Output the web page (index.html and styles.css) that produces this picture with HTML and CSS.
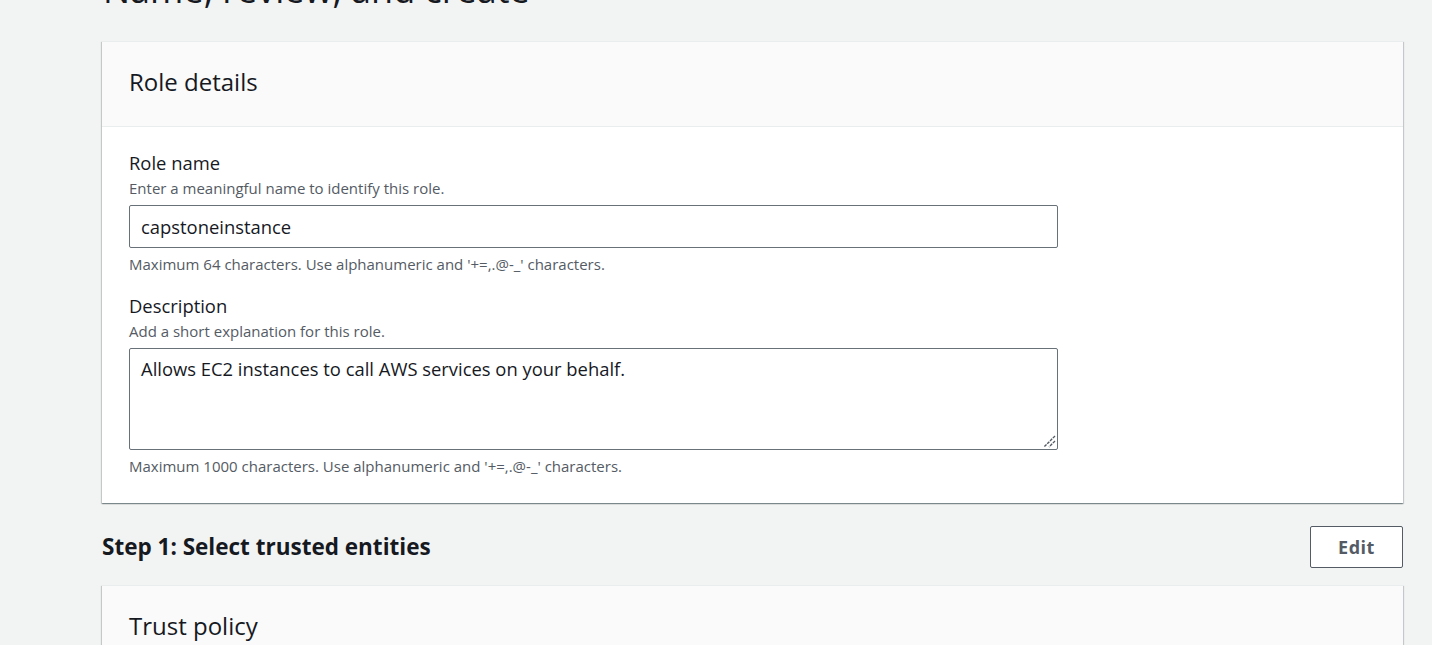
FILE: index.html
```html
<!DOCTYPE html>
<html>
<head>
<meta charset="utf-8">
<link rel="stylesheet" href="styles.css">
</head>
<body>
<main class="page">
  <h1 class="page-title">Name, review, and create</h1>
  <section class="card">
    <div class="card-header"><h2 class="card-title">Role details</h2></div>
    <div class="card-body">
      <div class="field">
        <div class="label">Role name</div>
        <div class="desc">Enter a meaningful name to identify this role.</div>
        <div class="input">capstoneinstance</div>
        <div class="constraint">Maximum 64 characters. Use alphanumeric and '+=,.@-_' characters.</div>
      </div>
      <div class="field">
        <div class="label">Description</div>
        <div class="desc">Add a short explanation for this role.</div>
        <div class="input textarea">Allows EC2 instances to call AWS services on your behalf.
          <svg class="grip" width="14" height="14" viewBox="0 0 14 14"><path d="M13 2 L2 13 M13 7 L7 13" stroke="#545b64" stroke-width="1.4" stroke-dasharray="3 1"/></svg>
        </div>
        <div class="constraint">Maximum 1000 characters. Use alphanumeric and '+=,.@-_' characters.</div>
      </div>
    </div>
  </section>
  <div class="step-head">
    <h2 class="step-title">Step 1: Select trusted entities</h2>
    <button class="btn">Edit</button>
  </div>
  <section class="card">
    <div class="card-header"><h2 class="card-title">Trust policy</h2></div>
  </section>
</main>
</body>
</html>
```
FILE: styles.css
```css
html, body { margin: 0; padding: 0; }
body {
  background: #f2f3f3;
  font-family: "Open Sans", "Noto Sans", sans-serif;
  color: #16191f;
  overflow: hidden;
  height: 645px;
}
.page {
  width: 1301px;
  margin-left: 102px;
}
.page-title {
  font-size: 36px;
  font-weight: 400;
  line-height: 40px;
  margin: -30px 0 0 1px;
  height: 40px;
  white-space: nowrap;
}
.card {
  background: #fff;
  margin-top: 31px;
  box-shadow: 0 1px 1px 0 rgba(0,28,36,0.3), 1px 1px 1px 0 rgba(0,28,36,0.15), -1px 1px 1px 0 rgba(0,28,36,0.15);
  border-top: 1px solid #eaeded;
}
.card-header {
  background: #fafafa;
  height: 85px;
  box-sizing: border-box;
  padding: 0 27px 5px;
  border-bottom: 1px solid #eaeded;
  display: flex;
  align-items: center;
}
.card-title {
  font-size: 24px;
  font-weight: 400;
  margin: 0;
  line-height: 30px;
}
.card-body {
  padding: 24px 27px 26px;
  display: flex;
  flex-direction: column;
  gap: 19px;
}
.label {
  font-size: 18.4px;
  line-height: 24px;
}
.desc, .constraint {
  font-size: 15px;
  line-height: 22px;
  color: #545b64;
}
.desc { margin-top: 2px; }
.input {
  width: 929px;
  box-sizing: border-box;
  height: 43px;
  border: 1px solid #687078;
  border-radius: 2px;
  margin-top: 6px;
  padding: 0 11px;
  font-size: 18.4px;
  line-height: 41px;
  position: relative;
  background: #fff;
}
.textarea {
  height: 102px;
  line-height: 26px;
  padding-top: 7px;
}
.grip {
  position: absolute;
  right: 1px;
  bottom: 1px;
}
.constraint { margin-top: 5px; }
.step-head {
  display: flex;
  justify-content: space-between;
  align-items: center;
  margin-top: 23px;
}
.step-title {
  font-size: 22.5px;
  font-weight: 700;
  margin: 0;
  line-height: 28px;
}
.btn {
  width: 93px;
  height: 42px;
  background: #fff;
  border: 1px solid #545b64;
  border-radius: 2px;
  font-family: inherit;
  font-size: 18px;
  font-weight: 700;
  color: #545b64;
  letter-spacing: 0.5px;
}
.step-head + .card { margin-top: 17px; }
```
